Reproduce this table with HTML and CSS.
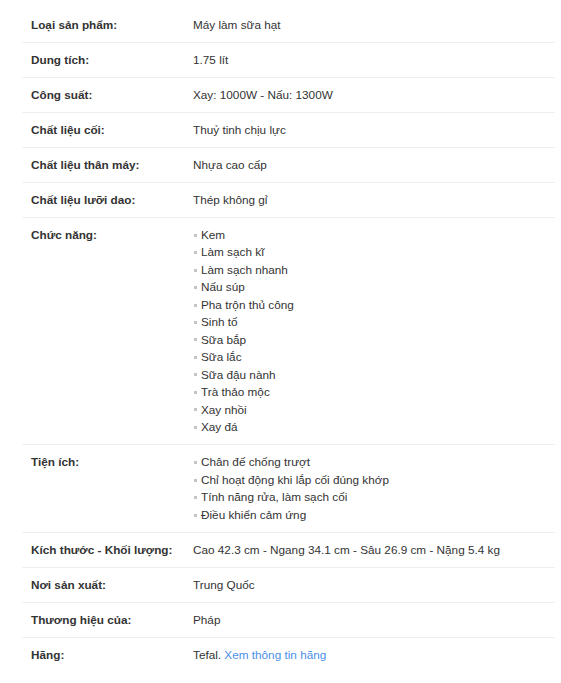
FILE: index.html
```html
<!DOCTYPE html>
<html lang="vi">
<head>
<meta charset="utf-8">
<title>Thông số</title>
<link rel="stylesheet" href="styles.css">
</head>
<body>
<div class="specs">
  <div class="row"><div class="label">Loại sản phẩm:</div><div class="value">Máy làm sữa hạt</div></div>
  <div class="row"><div class="label">Dung tích:</div><div class="value">1.75 lít</div></div>
  <div class="row"><div class="label">Công suất:</div><div class="value">Xay: 1000W - Nấu: 1300W</div></div>
  <div class="row"><div class="label">Chất liệu cối:</div><div class="value">Thuỷ tinh chịu lực</div></div>
  <div class="row"><div class="label">Chất liệu thân máy:</div><div class="value">Nhựa cao cấp</div></div>
  <div class="row"><div class="label">Chất liệu lưỡi dao:</div><div class="value">Thép không gỉ</div></div>
  <div class="row"><div class="label">Chức năng:</div>
    <ul class="value list">
      <li>Kem</li>
      <li>Làm sạch kĩ</li>
      <li>Làm sạch nhanh</li>
      <li>Nấu súp</li>
      <li>Pha trộn thủ công</li>
      <li>Sinh tố</li>
      <li>Sữa bắp</li>
      <li>Sữa lắc</li>
      <li>Sữa đậu nành</li>
      <li>Trà thảo mộc</li>
      <li>Xay nhồi</li>
      <li>Xay đá</li>
    </ul>
  </div>
  <div class="row"><div class="label">Tiện ích:</div>
    <ul class="value list">
      <li>Chân đế chống trượt</li>
      <li>Chỉ hoạt động khi lắp cối đúng khớp</li>
      <li>Tính năng rửa, làm sạch cối</li>
      <li>Điều khiển cảm ứng</li>
    </ul>
  </div>
  <div class="row"><div class="label">Kích thước - Khối lượng:</div><div class="value">Cao 42.3 cm - Ngang 34.1 cm - Sâu 26.9 cm - Nặng 5.4 kg</div></div>
  <div class="row"><div class="label">Nơi sản xuất:</div><div class="value">Trung Quốc</div></div>
  <div class="row"><div class="label">Thương hiệu của:</div><div class="value">Pháp</div></div>
  <div class="row last"><div class="label">Hãng:</div><div class="value">Tefal. <a class="link" href="#">Xem thông tin hãng</a></div></div>
</div>
</body>
</html>
```
FILE: styles.css
```css
html, body {
  margin: 0;
  padding: 0;
  background: #fff;
}
body {
  font-family: "Liberation Sans", Arial, sans-serif;
  font-size: 11.75px;
  color: #242424;
}
.specs {
  margin: 7.5px 6px 0 22px;
}
.row {
  display: grid;
  grid-template-columns: 171px 1fr;
  border-bottom: 1px solid #efefef;
}
.row.last {
  border-bottom: none;
}
.label {
  padding: 8.5px 0 8.5px 9px;
  line-height: 17px;
  font-weight: bold;
  color: #333;
}
.value {
  padding: 8.5px 0;
  line-height: 17px;
  color: #333;
}
.list {
  margin: 0;
  list-style: none;
  padding-left: 0;
}
.list li {
  display: flex;
  align-items: center;
  line-height: 17.45px;
}
.list li::before {
  content: "";
  width: 3px;
  height: 3px;
  background: #c4c4c4;
  margin: 1px 4px 0 1px;
  flex: none;
}
.link {
  color: #4a8fe7;
  text-decoration: none;
}
```
